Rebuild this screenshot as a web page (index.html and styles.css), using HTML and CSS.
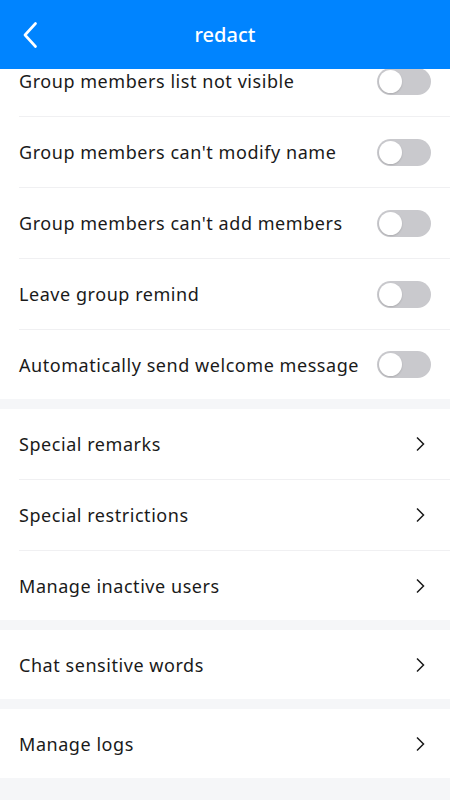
FILE: index.html
```html
<!DOCTYPE html>
<html lang="en">
<head>
    <meta charset="UTF-8">
    <meta name="viewport" content="width=device-width, initial-scale=1.0">
    <title>redact</title>
    <link rel="stylesheet" href="styles.css">
</head>
<body>

<div class="page">
    <!-- Header -->
    <header class="top-bar">
        <span class="back">
            <svg width="14" height="26" viewBox="0 0 14 26">
                <path d="M12.5 1.5 L2 13 L12.5 24.5" fill="none" stroke="#fff" stroke-width="2.6" stroke-linecap="round" stroke-linejoin="round"/>
            </svg>
        </span>
        <h1>redact</h1>
    </header>

    <div class="viewport">
        <div class="scroller">
            <!-- Switch settings -->
            <section class="group">
                <div class="row">
                    <span class="label">Group members list not visible</span>
                    <span class="switch"><span class="knob"></span></span>
                </div>
                <div class="row">
                    <span class="label">Group members can't modify name</span>
                    <span class="switch"><span class="knob"></span></span>
                </div>
                <div class="row">
                    <span class="label">Group members can't add members</span>
                    <span class="switch"><span class="knob"></span></span>
                </div>
                <div class="row">
                    <span class="label">Leave group remind</span>
                    <span class="switch"><span class="knob"></span></span>
                </div>
                <div class="row">
                    <span class="label">Automatically send welcome message</span>
                    <span class="switch"><span class="knob"></span></span>
                </div>
            </section>

            <!-- Links -->
            <section class="group">
                <div class="row">
                    <span class="label">Special remarks</span>
                    <span class="arrow"><svg width="10" height="16" viewBox="0 0 10 16"><path d="M2 1.5 L8.5 8 L2 14.5" fill="none" stroke="#1a1a1a" stroke-width="1.5"/></svg></span>
                </div>
                <div class="row">
                    <span class="label">Special restrictions</span>
                    <span class="arrow"><svg width="10" height="16" viewBox="0 0 10 16"><path d="M2 1.5 L8.5 8 L2 14.5" fill="none" stroke="#1a1a1a" stroke-width="1.5"/></svg></span>
                </div>
                <div class="row">
                    <span class="label">Manage inactive users</span>
                    <span class="arrow"><svg width="10" height="16" viewBox="0 0 10 16"><path d="M2 1.5 L8.5 8 L2 14.5" fill="none" stroke="#1a1a1a" stroke-width="1.5"/></svg></span>
                </div>
            </section>

            <section class="group">
                <div class="row">
                    <span class="label">Chat sensitive words</span>
                    <span class="arrow"><svg width="10" height="16" viewBox="0 0 10 16"><path d="M2 1.5 L8.5 8 L2 14.5" fill="none" stroke="#1a1a1a" stroke-width="1.5"/></svg></span>
                </div>
            </section>

            <section class="group">
                <div class="row">
                    <span class="label">Manage logs</span>
                    <span class="arrow"><svg width="10" height="16" viewBox="0 0 10 16"><path d="M2 1.5 L8.5 8 L2 14.5" fill="none" stroke="#1a1a1a" stroke-width="1.5"/></svg></span>
                </div>
            </section>
        </div>
    </div>
</div>

</body>
</html>
```

FILE: styles.css
```css
body {
    margin: 0;
    font-family: "Noto Sans", Roboto, Arial, sans-serif;
    background-color: #f5f6f8;
    color: #1a1a1a;
}

.page {
    width: 450px;
    height: 800px;
    display: flex;
    flex-direction: column;
    overflow: hidden;
}

.top-bar {
    height: 69px;
    flex-shrink: 0;
    background-color: #0084ff;
    color: #fff;
    display: flex;
    align-items: center;
    justify-content: center;
    position: relative;
}

.top-bar h1 {
    margin: 0;
    font-size: 20px;
    font-weight: 500;
}

.top-bar .back {
    position: absolute;
    left: 23px;
    top: 22px;
    display: flex;
}

.viewport {
    flex: 1;
    overflow: hidden;
}

/* list is scrolled a little, first row sits under the header */
.scroller {
    margin-top: -23px;
}

.group {
    background-color: #fff;
    margin-bottom: 10px;
}

.row {
    height: 70px;
    margin-left: 19px;
    padding-right: 19px;
    display: flex;
    align-items: center;
    justify-content: space-between;
    border-bottom: 1px solid #f0f0f2;
}

.row:last-child {
    height: 69px;
    border-bottom: none;
}

.label {
    font-size: 18px;
    letter-spacing: 0.55px;
}

.switch {
    width: 54px;
    height: 27px;
    border-radius: 14px;
    background-color: #c9c9cd;
    display: flex;
    align-items: center;
    padding-left: 2px;
    box-sizing: border-box;
}

.knob {
    width: 23px;
    height: 23px;
    border-radius: 50%;
    background-color: #fff;
    box-shadow: 0 1px 2px rgba(0, 0, 0, 0.15);
}

.arrow {
    display: flex;
    margin-right: 6px;
}
```
